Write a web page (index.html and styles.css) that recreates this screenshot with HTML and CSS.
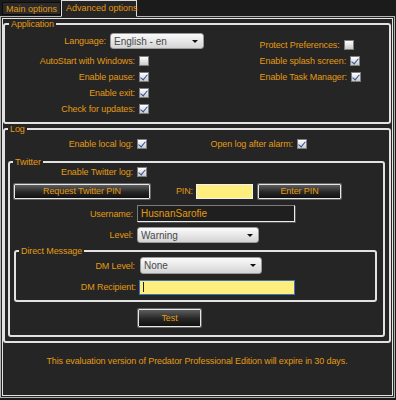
FILE: index.html
```html
<!DOCTYPE html>
<html lang="en">
<head>
    <meta charset="UTF-8">
    <title>Predator - Advanced options</title>
    <link rel="stylesheet" href="styles.css">
</head>
<body>
    <div class="tabs">
        <div class="tab">Main options</div>
        <div class="tab active">Advanced options</div>
    </div>
    <div class="panel">
        <fieldset class="group app">
            <legend>Application</legend>
            <div class="cols">
                <div class="col-left">
                    <div class="row lang">
                        <span class="lbl">Language:</span>
                        <div class="select">English - en<span class="arrow"></span></div>
                    </div>
                    <div class="row"><span class="lbl">AutoStart with Windows:</span><span class="check"></span></div>
                    <div class="row"><span class="lbl">Enable pause:</span><span class="check on"></span></div>
                    <div class="row"><span class="lbl">Enable exit:</span><span class="check on"></span></div>
                    <div class="row"><span class="lbl">Check for updates:</span><span class="check on"></span></div>
                </div>
                <div class="col-right">
                    <div class="row"><span class="lbl">Protect Preferences:</span><span class="check"></span></div>
                    <div class="row"><span class="lbl">Enable splash screen:</span><span class="check on"></span></div>
                    <div class="row"><span class="lbl">Enable Task Manager:</span><span class="check on"></span></div>
                </div>
            </div>
        </fieldset>

        <fieldset class="group log">
            <legend>Log</legend>
            <div class="row">
                <span class="lbl">Enable local log:</span><span class="check on"></span>
                <span class="lbl alarm">Open log after alarm:</span><span class="check on"></span>
            </div>

            <fieldset class="group twitter">
                <legend>Twitter</legend>
                <div class="row short"><span class="lbl">Enable Twitter log:</span><span class="check on"></span></div>
                <div class="row pin-row">
                    <div class="btn request">Request Twitter PIN</div>
                    <span class="lbl pin">PIN:</span>
                    <div class="input yellow pin-input"></div>
                    <div class="btn enter">Enter PIN</div>
                </div>
                <div class="row user-row">
                    <span class="lbl">Username:</span>
                    <div class="input dark user">HusnanSarofie</div>
                </div>
                <div class="row level-row">
                    <span class="lbl">Level:</span>
                    <div class="select level">Warning<span class="arrow"></span></div>
                </div>

                <fieldset class="group dm">
                    <legend>Direct Message</legend>
                    <div class="row dm-level">
                        <span class="lbl">DM Level:</span>
                        <div class="select level">None<span class="arrow"></span></div>
                    </div>
                    <div class="row dm-rcpt">
                        <span class="lbl">DM Recipient:</span>
                        <div class="input yellow focus rcpt"><span class="caret"></span></div>
                    </div>
                </fieldset>

                <div class="test-row">
                    <div class="btn test">Test</div>
                </div>
            </fieldset>
        </fieldset>

        <p class="notice">This evaluation version of Predator Professional Edition will expire in 30 days.</p>
    </div>
</body>
</html>
```

FILE: styles.css
```css
*{
    box-sizing: border-box;
}
body{
    margin: 0;
    background-color: #1b1b1b;
    font-family: "Liberation Sans", Arial, sans-serif;
    font-size: 9px;
    letter-spacing: -0.1px;
    color: #e39a14;
}

.tabs{
    display: flex;
    align-items: flex-end;
    height: 16px;
    padding-left: 2px;
}
.tab{
    height: 13px;
    line-height: 12px;
    padding: 0 3px;
    width: 59px;
    background-color: #2b2b2b;
    border: 1px solid #0c0c0c;
    white-space: nowrap;
    margin-bottom: 1px;
    letter-spacing: 0;
}
.tab.active{
    position: relative;
    z-index: 2;
    width: 76px;
    height: 17px;
    line-height: 14px;
    padding-left: 4px;
    margin-bottom: -1px;
    background-color: #252525;
    border: 1px solid #dedede;
    border-bottom-color: #252525;
}

.panel{
    width: 395px;
    height: 382px;
    background-color: #252525;
    border: 1px solid #b5b5b5;
    box-shadow: inset 0 0 0 1px #252525, inset 0 0 0 2px #e4e4e4;
    padding: 2px 3px 0 2px;
}

.group{
    margin: 0;
    padding: 0;
    border: 2px solid #e2e2e2;
    border-radius: 3px;
    min-width: 0;
}
.group legend{
    line-height: 10px;
    padding: 0 2px;
    margin-left: 3px;
}

.row{
    display: flex;
    align-items: center;
    height: 16px;
}
.lbl{
    text-align: right;
    padding-right: 4px;
    white-space: nowrap;
}
.check{
    width: 10px;
    height: 10px;
    border: 1px solid #7d7d7d;
    background: linear-gradient(#ffffff, #c9c9c9);
    position: relative;
}
.check.on::after{
    content: "";
    position: absolute;
    left: 2px;
    top: 0px;
    width: 3px;
    height: 6px;
    border: solid #2c4c9c;
    border-width: 0 1.5px 1.5px 0;
    transform: rotate(40deg);
}

.select{
    position: relative;
    height: 16px;
    line-height: 15px;
    padding-left: 3px;
    color: #4a4a4a;
    background: linear-gradient(#fbfbfb, #d4d4d4);
    border: 1px solid #9a9a9a;
    border-radius: 3px;
    font-size: 10px;
    letter-spacing: 0;
}
.arrow{
    position: absolute;
    right: 5px;
    top: 6px;
    border: 3px solid transparent;
    border-top: 3px solid #111;
    border-bottom: 0;
}

.btn{
    height: 15px;
    line-height: 13px;
    text-align: center;
    background: linear-gradient(#5d5d5d, #262626 55%, #111);
    border: 1px solid #e6e6e6;
    box-shadow: 0 0 0 1px #666;
    border-radius: 1px;
}
.input{
    height: 15px;
    line-height: 13px;
    padding-left: 3px;
}
.input.yellow{
    background-color: #fdee7e;
    border: 1px solid #f2f2f2;
}
.input.focus{
    border-color: #3a74b8;
}
.input.dark{
    background-color: #1f1f1f;
    border: 1px solid #ececec;
    border-top-color: #7a7a7a;
    border-left-color: #7a7a7a;
    box-shadow: 1px 1px 0 #555;
    font-size: 10px;
    letter-spacing: 0;
}
.caret{
    display: inline-block;
    width: 1px;
    height: 10px;
    margin-top: 1px;
    background-color: #222;
}

/* application */
.app legend{
    margin-left: 4px;
}
.cols{
    display: flex;
    justify-content: space-between;
    padding: 4px 0 5px;
}
.col-left .lbl{
    width: 134px;
}
.col-left .row.lang{
    margin-bottom: 4px;
}
.col-left .row.lang .lbl{
    width: 105px;
}
.col-left .select{
    width: 94px;
}
.col-right{
    padding-top: 4px;
    padding-right: 28px;
}

/* log */
.log > .row{
    margin-top: 2px;
}
.log > .row .lbl{
    width: 132px;
}
.log > .row .lbl.alarm{
    width: 150px;
}
.twitter{
    margin: 5px 4px 4px 3px;
    padding-bottom: 8px;
}
.twitter .row.short{
    height: 12px;
    margin-top: -1px;
}
.twitter .row .lbl{
    width: 127px;
}
.pin-row{
    margin-top: 5px;
}
.btn.request{
    width: 136px;
    margin-left: 4px;
}
.twitter .row .lbl.pin{
    width: 46px;
    padding-right: 3px;
}
.pin-input{
    width: 57px;
}
.btn.enter{
    width: 83px;
    margin-left: 5px;
}
.row.user-row{
    margin-top: 6px;
    height: 17px;
}
.input.user{
    width: 158px;
    height: 17px;
    line-height: 15px;
}
.level-row{
    margin-top: 5px;
}
.select.level{
    width: 122px;
}
.dm{
    margin: 3px 6px 0 4px;
    padding-bottom: 5px;
}
.twitter .dm .row .lbl{
    width: 124px;
    padding-right: 5px;
}
.row.dm-level{
    margin-top: 1px;
    height: 17px;
}
.dm-level .select.level{
    height: 17px;
    line-height: 16px;
}
.dm-rcpt{
    margin-top: 5px;
}
.twitter .dm .dm-rcpt .lbl{
    width: 123px;
    padding-right: 3px;
}
.input.rcpt{
    width: 156px;
}
.test-row{
    display: flex;
    padding-left: 128px;
    margin-top: 7px;
}
.btn.test{
    width: 63px;
    height: 18px;
    line-height: 16px;
}

.notice{
    margin: 13px 0 0;
    text-align: center;
}
```
